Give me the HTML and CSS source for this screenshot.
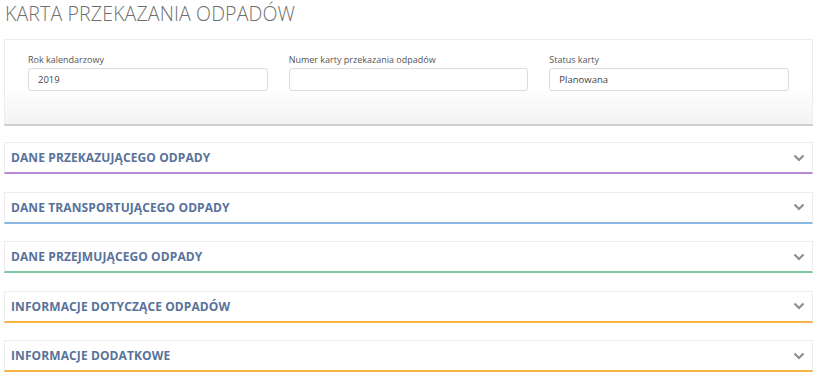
FILE: index.html
```html
<!DOCTYPE html>
<html lang="pl">
<head>
<meta charset="utf-8">
<title>Karta przekazania odpadów</title>
<link rel="stylesheet" href="styles.css">
</head>
<body>
<div class="page">
  <h1 class="title">KARTA PRZEKAZANIA ODPADÓW</h1>
  <div class="header-card">
    <div class="field">
      <label class="label">Rok kalendarzowy</label>
      <div class="input">2019</div>
    </div>
    <div class="field">
      <label class="label">Numer karty przekazania odpadów</label>
      <div class="input"></div>
    </div>
    <div class="field">
      <label class="label">Status karty</label>
      <div class="input">Planowana</div>
    </div>
  </div>
  <div class="panels">
    <div class="panel purple"><span class="panel-title">DANE PRZEKAZUJĄCEGO ODPADY</span><svg class="chev" viewBox="0 0 12 8" width="12" height="8"><path d="M1.5 1.5 L6 6 L10.5 1.5" fill="none" stroke="#8a8f96" stroke-width="2.2"/></svg></div>
    <div class="panel blue"><span class="panel-title">DANE TRANSPORTUJĄCEGO ODPADY</span><svg class="chev" viewBox="0 0 12 8" width="12" height="8"><path d="M1.5 1.5 L6 6 L10.5 1.5" fill="none" stroke="#8a8f96" stroke-width="2.2"/></svg></div>
    <div class="panel green"><span class="panel-title">DANE PRZEJMUJĄCEGO ODPADY</span><svg class="chev" viewBox="0 0 12 8" width="12" height="8"><path d="M1.5 1.5 L6 6 L10.5 1.5" fill="none" stroke="#8a8f96" stroke-width="2.2"/></svg></div>
    <div class="panel orange"><span class="panel-title">INFORMACJE DOTYCZĄCE ODPADÓW</span><svg class="chev" viewBox="0 0 12 8" width="12" height="8"><path d="M1.5 1.5 L6 6 L10.5 1.5" fill="none" stroke="#8a8f96" stroke-width="2.2"/></svg></div>
    <div class="panel orange"><span class="panel-title">INFORMACJE DODATKOWE</span><svg class="chev" viewBox="0 0 12 8" width="12" height="8"><path d="M1.5 1.5 L6 6 L10.5 1.5" fill="none" stroke="#8a8f96" stroke-width="2.2"/></svg></div>
  </div>
</div>
</body>
</html>
```
FILE: styles.css
```css
html, body {
  margin: 0;
  padding: 0;
  background: #fff;
}
body {
  font-family: "Open Sans", "Liberation Sans", sans-serif;
}
.page {
  padding: 0 5px 0 4px;
}
.title {
  margin: 0;
  padding: 1px 0 0 1px;
  height: 39px;
  box-sizing: border-box;
  font-family: "Open Sans", sans-serif;
  font-weight: 300;
  font-size: 19.6px;
  line-height: 26px;
  color: #6f6f6f;
  letter-spacing: 0.1px;
}
.header-card {
  display: flex;
  gap: 21px;
  height: 87px;
  box-sizing: border-box;
  padding: 14px 23px 0 23px;
  border: 1px solid #ececec;
  border-bottom: 2px solid #cfcfd4;
  background: linear-gradient(to bottom, #ffffff 0%, #ffffff 55%, #f3f3f4 100%);
}
.field {
  width: 240px;
  display: flex;
  flex-direction: column;
}
.label {
  font-size: 9px;
  line-height: 12px;
  color: #555;
  margin-bottom: 2px;
}
.input {
  height: 23px;
  box-sizing: border-box;
  border: 1px solid #dcdcdc;
  border-radius: 3px;
  background: #fff;
  padding: 0 9px;
  font-size: 9.5px;
  line-height: 21px;
  color: #444;
}
.panels {
  display: flex;
  flex-direction: column;
  gap: 17.5px;
  margin-top: 16px;
}
.panel {
  height: 32px;
  box-sizing: border-box;
  border: 1px solid #ececec;
  border-bottom-width: 2px;
  display: flex;
  align-items: center;
  justify-content: space-between;
  padding: 0 7px 0 6px;
  background: #fff;
}
.panel.purple { border-bottom-color: #b98ad8; }
.panel.blue { border-bottom-color: #8bb8e2; }
.panel.green { border-bottom-color: #7fc7a0; }
.panel.orange { border-bottom-color: #f6b344; }
.panel-title {
  font-weight: 700;
  font-size: 12px;
  color: #58729a;
  letter-spacing: 0.1px;
}
.chev {
  display: block;
}
```
